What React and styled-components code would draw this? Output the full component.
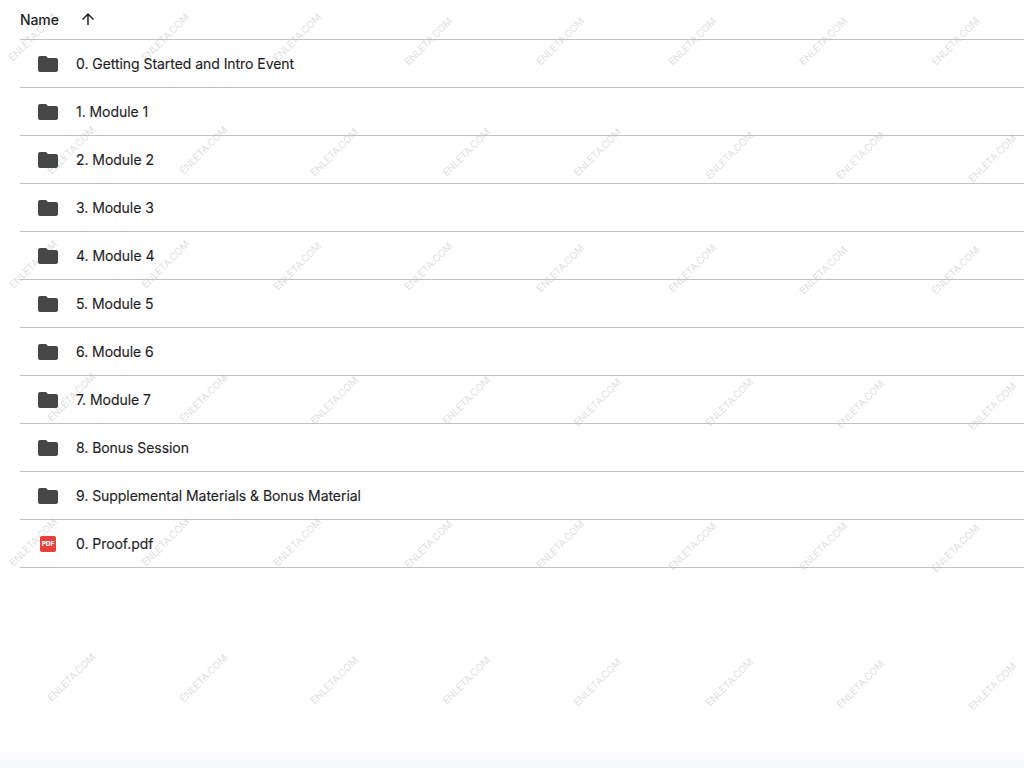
import styled, { createGlobalStyle } from "styled-components";

const GlobalStyle = createGlobalStyle`
  html, body {
    margin: 0;
    padding: 0;
    background: #fff;
    overflow: hidden;
  }
`;

const Page = styled.div`
  position: relative;
  width: 1024px;
  height: 768px;
  overflow: hidden;
  display: flex;
  flex-direction: column;
  font-family: Inter, "Liberation Sans", sans-serif;
  color: #1f1f1f;
`;

const List = styled.div`
  position: relative;
  z-index: 1;
  flex: 1;
  padding-left: 20px;
`;

const Header = styled.div`
  height: 39px;
  display: flex;
  align-items: center;
  border-bottom: 1px solid #c0c2c1;
  font-size: 14px;
  font-weight: 500;
  letter-spacing: -0.1px;
  color: #1f1f1f;
`;

const SortIcon = styled.svg`
  width: 18px;
  height: 18px;
  margin-left: 20px;
  margin-top: -1px;
  fill: #1f1f1f;
`;

const Row = styled.div`
  height: 47px;
  display: flex;
  align-items: center;
  border-bottom: 1px solid #c0c2c1;
  font-size: 14px;
  letter-spacing: -0.05px;
  -webkit-text-stroke: 0.15px #1f1f1f;
`;

const IconSlot = styled.div`
  width: 56px;
  padding-left: 16px;
  box-sizing: border-box;
  display: flex;
  align-items: center;
`;

const FolderIcon = styled.svg`
  width: 24px;
  height: 24px;
  fill: #444746;
`;

const PdfBadge = styled.div`
  width: 16px;
  height: 16px;
  margin-left: 4px;
  border-radius: 2px;
  background: #e8403a;
  color: #fff;
  font-size: 6.5px;
  font-weight: 800;
  letter-spacing: 0;
  line-height: 16px;
  text-align: center;
  -webkit-text-stroke: 0;
`;

const BottomBar = styled.div`
  height: 16px;
  background: linear-gradient(#fcfcfe, #f8f9fd);
`;

const Mark = styled.span`
  position: absolute;
  z-index: 0;
  left: ${({ $x }) => $x}px;
  top: ${({ $y }) => $y}px;
  transform: translate(-50%, -50%) rotate(-45deg);
  font-size: 10px;
  letter-spacing: -0.2px;
  color: #e0e0e0;
  white-space: nowrap;
  pointer-events: none;
`;

const items = [
  "0. Getting Started and Intro Event",
  "1. Module 1",
  "2. Module 2",
  "3. Module 3",
  "4. Module 4",
  "5. Module 5",
  "6. Module 6",
  "7. Module 7",
  "8. Bonus Session",
  "9. Supplemental Materials & Bonus Material",
];

// watermark centres, one row per band
const marks = [
  [[32, 37], [165, 37], [297, 37], [428, 41], [560, 41], [692, 41], [823, 41], [955, 41]],
  [[71, 150], [203, 150], [334, 152], [466, 152], [597, 152], [729, 155], [860, 155], [992, 158]],
  [[33, 264], [165, 264], [297, 266], [428, 266], [560, 268], [692, 268], [823, 270], [955, 270]],
  [[71, 397], [203, 398], [334, 400], [466, 400], [597, 402], [729, 402], [860, 404], [992, 406]],
  [[33, 542], [165, 542], [297, 542], [428, 544], [560, 544], [692, 546], [823, 546], [955, 548]],
  [[71, 677], [203, 678], [334, 680], [466, 680], [597, 682], [729, 682], [860, 684], [992, 686]],
].flat();

export default function App() {
  return (
    <Page>
      <GlobalStyle />
      <List>
        <Header>
          Name
          <SortIcon viewBox="0 0 24 24">
            <path d="M4 12l1.41 1.41L11 7.83V20h2V7.83l5.58 5.59L20 12l-8-8-8 8z" />
          </SortIcon>
        </Header>
        {items.map((name) => (
          <Row key={name}>
            <IconSlot>
              <FolderIcon viewBox="0 0 24 24">
                <path d="M10 4H4c-1.1 0-1.99.9-1.99 2L2 18c0 1.1.9 2 2 2h16c1.1 0 2-.9 2-2V8c0-1.1-.9-2-2-2h-8l-2-2z" />
              </FolderIcon>
            </IconSlot>
            {name}
          </Row>
        ))}
        <Row>
          <IconSlot>
            <PdfBadge>PDF</PdfBadge>
          </IconSlot>
          0. Proof.pdf
        </Row>
      </List>
      <BottomBar />
      {marks.map(([x, y]) => (
        <Mark key={`${x}-${y}`} $x={x} $y={y}>
          ENLETA.COM
        </Mark>
      ))}
    </Page>
  );
}
